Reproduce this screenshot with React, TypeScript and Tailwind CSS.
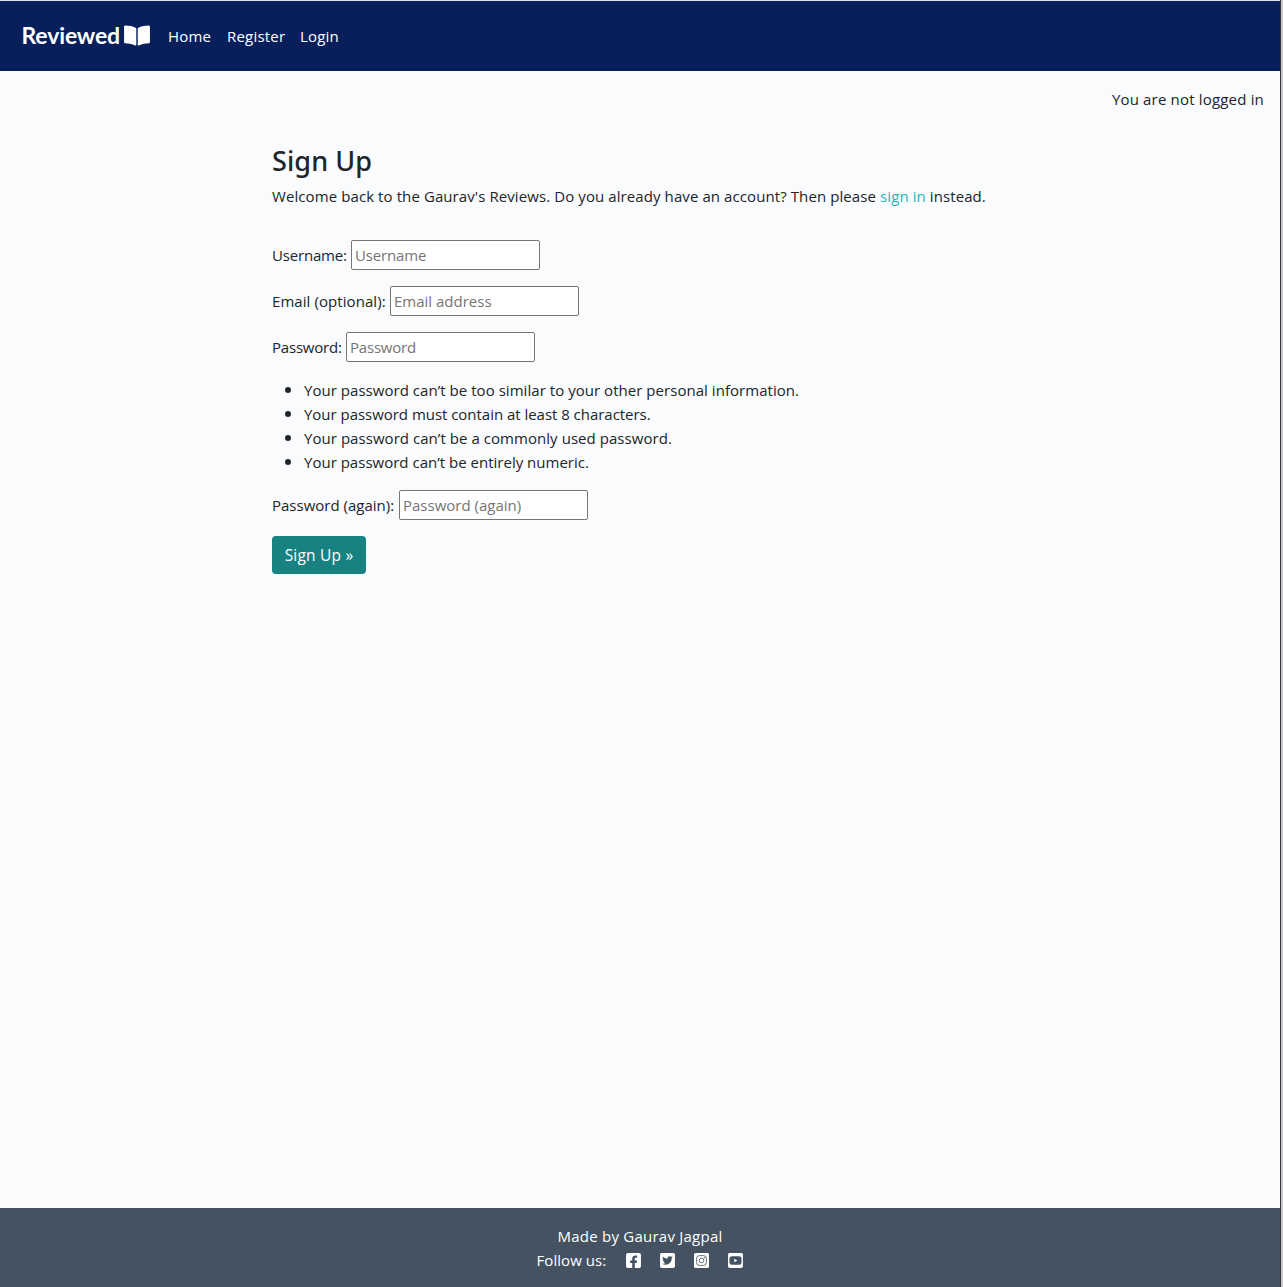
import type { ReactNode } from "react";
import { FaBookOpen, FaFacebookSquare, FaTwitterSquare, FaYoutubeSquare } from "react-icons/fa";

const rules = [
  { text: "Your password can’t be too similar to your other personal information.", spacing: "tracking-[0.04px]" },
  { text: "Your password must contain at least 8 characters.", spacing: "tracking-[-0.03px]" },
  { text: "Your password can’t be a commonly used password.", spacing: "tracking-[0.05px]" },
  { text: "Your password can’t be entirely numeric.", spacing: "tracking-[0.01px]" },
];

function Field({
  label,
  placeholder,
  labelClass,
  inputClass = "",
  type = "text",
}: {
  label: string;
  placeholder: string;
  labelClass: string;
  inputClass?: string;
  type?: string;
}) {
  return (
    <label className="mb-4 flex h-[30px] items-center">
      <span className={`${labelClass} shrink-0 whitespace-nowrap`}>{label}</span>
      <input
        type={type}
        placeholder={placeholder}
        className={`${inputClass} h-[30px] w-[189px] rounded-[2px] border border-[#767676] bg-white px-[3px] placeholder:text-[#757575]`}
      />
    </label>
  );
}

function NavLink({ children, width }: { children: ReactNode; width: string }) {
  return (
    <a href="#" className={`${width} whitespace-nowrap`}>
      {children}
    </a>
  );
}

/* Filled square with a fine camera outline. */
function InstagramIcon() {
  return (
    <svg viewBox="0 0 17 17" className="h-[17px] w-[17px]" fill="none">
      <rect x="1" y="1" width="15" height="15" rx="1.6" fill="white" />
      <g stroke="#445261" strokeWidth="0.8">
        <rect x="3.6" y="3.6" width="9.8" height="9.8" rx="2.8" />
        <circle cx="8.5" cy="8.5" r="2.3" />
      </g>
      <circle cx="11.3" cy="5.7" r="0.6" fill="#445261" />
    </svg>
  );
}

export default function App() {
  return (
    <div className="flex h-[1287px] w-[1283px] overflow-hidden bg-[#c9c7c9] font-['Open_Sans',sans-serif] text-[15px] leading-6 text-[#212529]">
      <div className="flex w-[1280px] flex-col border-t border-[#dfe5e6] bg-[#f9fbfd]">
        <header className="flex h-[70px] items-center bg-[#081f5c] text-white">
          <a href="#" className="ml-[21.5px] flex w-[146.5px] items-center font-['Lato',sans-serif] text-[23px] font-bold">
            <span className="w-[102.5px] -translate-y-px tracking-[-0.15px]">Reviewed</span>
            <FaBookOpen className="h-[23px] w-[26px] -translate-y-px" />
          </a>
          <nav className="flex pb-px tracking-[0.2px]">
            <NavLink width="w-[59px]">Home</NavLink>
            <NavLink width="w-[73px]">Register</NavLink>
            <NavLink width="w-[40px]">Login</NavLink>
          </nav>
        </header>

        <p className="mt-4 pr-4 text-right tracking-[0.18px]">You are not logged in</p>

        <main className="ml-[272px] flex-1 pt-[33px]">
          <h1 className="font-['Noto_Sans','Open_Sans',sans-serif] text-[27px] leading-[34px] font-medium tracking-[0.1px]">
            Sign Up
          </h1>
          <p className="mt-[6px] whitespace-nowrap tracking-[0.09px]">
            Welcome back to the Gaurav's Reviews. Do you already have an account? Then please{" "}
            <a href="#" className="text-[#24b9b9]">sign in</a> instead.
          </p>
          <form className="mt-8">
            <Field
              label="Username:"
              placeholder="Username"
              labelClass="w-[79px] tracking-[-0.18px]"
              inputClass="tracking-[-0.15px]"
            />
            <Field
              label="Email (optional):"
              placeholder="Email address"
              labelClass="w-[118px] tracking-[0.07px]"
            />
            <Field
              label="Password:"
              placeholder="Password"
              labelClass="w-[74px] tracking-[-0.2px]"
              inputClass="tracking-[-0.2px]"
              type="password"
            />
            <ul className="mb-4 list-disc pl-8">
              {rules.map((rule) => (
                <li key={rule.text} className="h-6 text-[17px] leading-[23px]">
                  <span className={`${rule.spacing} text-[15px]`}>{rule.text}</span>
                </li>
              ))}
            </ul>
            <Field label="Password (again):" placeholder="Password (again)" labelClass="w-[127px]" type="password" />
            <button
              type="button"
              className="h-[38px] w-[94px] rounded-[4px] bg-[#188181] text-[15.5px] tracking-[0.2px] whitespace-nowrap text-white"
            >
              Sign Up »
            </button>
          </form>
        </main>

        <footer className="flex h-[79px] flex-col items-center bg-[#445261] pt-4 text-white">
          <p className="tracking-[0.24px]">Made by Gaurav Jagpal</p>
          <div className="flex items-center pl-px">
            <span className="w-[88px] whitespace-nowrap tracking-[0.05px]">Follow us:</span>
            <div className="flex gap-[17.3px] text-[17px]">
              <FaFacebookSquare />
              <FaTwitterSquare />
              <InstagramIcon />
              <FaYoutubeSquare />
            </div>
          </div>
        </footer>
      </div>
      <div className="w-px bg-[#38383e]" />
    </div>
  );
}
